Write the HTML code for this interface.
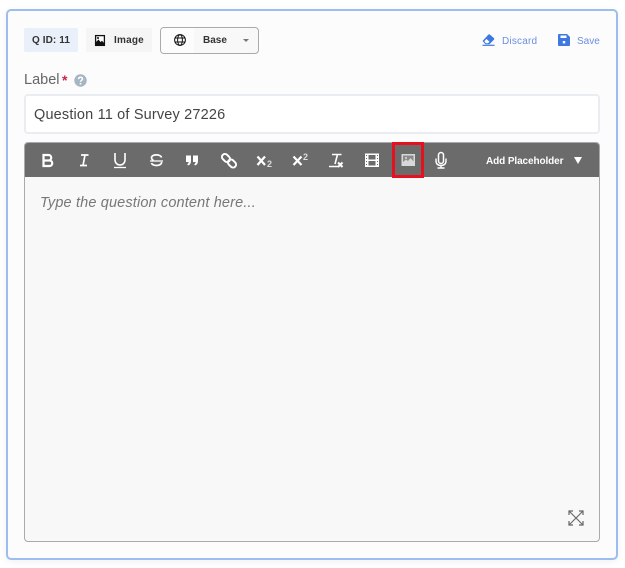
<!DOCTYPE html>
<html>
<head>
<meta charset="utf-8">
<style>
html,body{margin:0;padding:0;width:625px;height:568px;overflow:hidden;background:#fff;font-family:"Liberation Sans",sans-serif}
.a{position:absolute;box-sizing:border-box;white-space:nowrap}
svg{position:absolute;overflow:visible}
</style>
</head>
<body>
<div class="a" style="left:6px;top:9px;width:612px;height:551px;background:#fcfcfc;border:2px solid #9dbdf0;border-radius:5px;box-shadow:0 2px 8px rgba(0,0,0,.06)"></div>

<div class="a" style="left:24px;top:28px;width:54px;height:24px;background:#e9f0f9;border-radius:2px"></div>
<div class="a" style="left:24px;top:29px;width:54px;height:24px;font-size:10px;font-weight:700;line-height:24px;text-align:center;color:#333;letter-spacing:.1px">Q ID: 11</div>

<div class="a" style="left:86px;top:28px;width:66px;height:24px;background:#f5f5f5;border-radius:2px"></div>
<svg style="left:95px;top:35px" width="10" height="11" viewBox="0 0 10 11"><rect x=".6" y=".6" width="8.8" height="9.8" fill="#fff" stroke="#111" stroke-width="1.3"/><path d="M1 10V7l2.500-2.500L5.500 7 7 5.800 9 8v2z" fill="#111"/><circle cx="3" cy="3" r="1" fill="#111"/></svg>
<div class="a" style="left:114px;top:29px;height:24px;line-height:24px;font-size:10px;font-weight:700;color:#333;letter-spacing:.2px">Image</div>

<div class="a" style="left:160px;top:27px;width:99px;height:27px;border:1px solid #aaa;border-radius:4px;background:#f8f8f8"></div>
<div class="a" style="left:161px;top:28px;width:33px;height:25px;background:#fcfcfc;border-radius:3px 0 0 3px"></div>
<svg style="left:174px;top:34px" width="12" height="12" viewBox="0 0 12 12" fill="none" stroke="#111" stroke-width="1"><circle cx="6" cy="6" r="5.400"/><ellipse cx="6" cy="6" rx="2.400" ry="5.400"/><path d="M1 4h10M1 8h10"/></svg>
<div class="a" style="left:203px;top:28px;height:25px;line-height:26px;font-size:10px;font-weight:700;color:#333;letter-spacing:0">Base</div>
<div class="a" style="left:243px;top:39px;width:0;height:0;border-left:3px solid transparent;border-right:3px solid transparent;border-top:3px solid #777"></div>

<svg style="left:482px;top:34px" width="13" height="12" viewBox="0 0 13 12"><path d="M0.500 7 6.500.5q.7-.5 1.300 0l4.300 3.800q.5.600 0 1.200L7.500 10.200H3.500z" fill="#3f78e0"/><path d="M.5 11.300h12" stroke="#3f78e0" stroke-width="1.200"/><path d="M2.300 7.200 4.500 5l3 2.800-1.500 1.500H4z" fill="#fff"/></svg>
<div class="a" style="left:502px;top:34px;height:15px;line-height:15px;font-size:10px;color:#6a8fe0;letter-spacing:.2px">Discard</div>
<svg style="left:558px;top:34px" width="12" height="12" viewBox="0 0 12 12"><path d="M1 0h8l3 3v8q0 1-1 1H1q-1 0-1-1V1q0-1 1-1z" fill="#3f78e0"/><rect x="2.500" y="1.500" width="6" height="2.500" fill="#fff"/><rect x="4.800" y="7" width="2.400" height="2.400" fill="#fff"/></svg>
<div class="a" style="left:577px;top:34px;height:15px;line-height:15px;font-size:10px;color:#6a8fe0;letter-spacing:0">Save</div>

<div class="a" style="left:24px;top:71px;height:18px;line-height:18px;font-size:14.500px;color:#666">Label</div>
<div class="a" style="left:62px;top:71px;height:18px;line-height:18px;font-size:14px;font-weight:700;color:#c8244a">*</div>
<svg style="left:74px;top:74px" width="13" height="13" viewBox="0 0 13 13"><circle cx="6.500" cy="6.500" r="6.200" fill="#a5b5c2"/><path d="M4.500 5.200q.1-1.900 2-1.900t2 1.700c0 1.400-2 1.300-2 2.800" fill="none" stroke="#fff" stroke-width="1.500"/><rect x="5.700" y="8.900" width="1.600" height="1.600" fill="#fff"/></svg>

<div class="a" style="left:24px;top:94px;width:576px;height:40px;background:#fff;border:2px solid #e9edf1;border-radius:4px"></div>
<div class="a" style="left:34px;top:106px;height:18px;line-height:18px;font-size:14.500px;color:#444;letter-spacing:.17px">Question 11 of Survey 27226</div>

<div class="a" style="left:24px;top:142px;width:576px;height:400px;background:#f8f8f8;border:1px solid #aaa;border-radius:4px"></div>
<div class="a" style="left:25px;top:143px;width:574px;height:34px;background:#6b6b6b;border-radius:3px 3px 0 0"></div>

<svg style="left:25px;top:143px" width="574" height="34" viewBox="0 0 574 34" fill="none" stroke="#fff">
<path d="M18.500 12h5a2.700 2.700 0 0 1 0 5.500h-5zM18.500 17.500h6a2.700 2.700 0 0 1 0 5.500h-6zM18.500 11v13" stroke-width="2.200"/>
<path d="M56 12h7.500M55 22.500h7M60 12 58 22.500" stroke-width="1.700"/>
<path d="M90.500 10.500v7a5 5 0 0 0 10 0v-7" stroke-width="1.600" transform="translate(-.5 -.5)"/><path d="M89 24.500h12" stroke-width="1.300"/>
<path d="M125 18h13" stroke-width="1.300"/><path d="M136.500 14.500c-1-3.500-9.500-3.500-10 0 0 1.500 1 2.500 2 3M136.500 19c.8 4-8.800 4.800-10 1" stroke-width="1.700"/>
<path d="M161 12.500h5v5.500q0 3.500-3 4.500l-.8-1.300q1.300-.7 1.500-2.200H161zM168 12.500h5v5.500q0 3.500-3 4.500l-.8-1.300q1.300-.7 1.500-2.200H168z" fill="#fff" stroke="none"/>
<g stroke-width="2"><rect x="198" y="10.500" width="6" height="9" rx="3" transform="rotate(-45 201 15)"/><rect x="204" y="16" width="6" height="9" rx="3" transform="rotate(-45 207 20.500)"/></g>
<path d="M232.500 13.500 240 22M240 13.500 232.500 22" stroke-width="2.200"/>
<path d="M268.500 13.500 276.500 22M276.500 13.500 268.500 22" stroke-width="2.200"/>
<path d="M307 11.500h9.500M312.500 11.500l-2.500 9.500M304 23.500h9" stroke-width="1.600"/><path d="M313 19.500l4.500 4.500M317.500 19.500 313 24" stroke-width="2"/>
<rect x="340" y="10.500" width="14" height="13.500" fill="#fff" stroke="none"/>
<path d="M343.500 12h7v4.500h-7zM343.500 18h7v4.500h-7z" fill="#6b6b6b" stroke="none"/>
<path d="M341 12.500h1M341 15.500h1M341 18.500h1M341 21.500h1M352 12.500h1M352 15.500h1M352 18.500h1M352 21.500h1" stroke="#6b6b6b" stroke-width="1"/>
<rect x="376.500" y="11" width="13.500" height="12" fill="#d8d8d8" stroke="none"/>
<rect x="378" y="12.500" width="10.500" height="9" fill="#8a8a8a" stroke="none"/>
<path d="M378 21.500v-2.500l3-2.500 2 1.500 2.500-3 3 3.500v3z" fill="#d8d8d8" stroke="none"/><circle cx="381" cy="15" r="1" fill="#d8d8d8" stroke="none"/>
<rect x="413.500" y="9.500" width="5" height="11" rx="2.500" stroke-width="1.500"/>
<path d="M411 15.500v2q0 5 5 5t5-5v-2M416 22.500v2.500M412.500 25h7" stroke-width="1.400"/>
</svg>
<div class="a" style="left:267px;top:160px;height:8px;line-height:8px;font-size:9px;font-weight:700;color:#ddd">2</div>
<div class="a" style="left:303px;top:153px;height:8px;line-height:8px;font-size:9px;font-weight:700;color:#ddd">2</div>

<div class="a" style="left:392px;top:142px;width:32px;height:36px;border:3px solid #e8101f"></div>

<div class="a" style="left:486px;top:154px;height:15px;line-height:15px;font-size:10px;font-weight:700;color:#fff;letter-spacing:-.1px">Add Placeholder</div>
<div class="a" style="left:574px;top:157px;width:0;height:0;border-left:4px solid transparent;border-right:4px solid transparent;border-top:7px solid #fff"></div>

<div class="a" style="left:40px;top:194px;height:19px;line-height:19px;font-size:14.500px;font-style:italic;color:#777;letter-spacing:.15px">Type the question content here...</div>

<svg style="left:568px;top:510px" width="16" height="16" viewBox="0 0 16 16" fill="none" stroke="#666" stroke-width="1.100"><path d="M1 1l14 14M15 1 1 15"/><path d="M1 5V1h4M11 1h4v4M15 11v4h-4M5 15H1v-4" stroke-width="1.200"/></svg>
</body>
</html>
